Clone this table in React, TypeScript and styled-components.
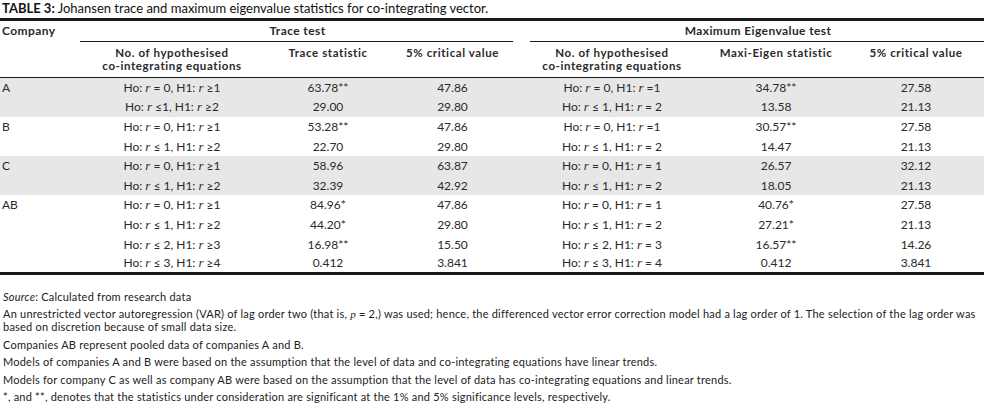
import React from 'react';
import styled, {createGlobalStyle} from 'styled-components';

const GlobalStyle = createGlobalStyle`
  html, body {
    margin: 0;
    padding: 0;
    background: #ffffff;
  }
  body {
    font-family: Lato, "Open Sans", sans-serif;
    color: #222;
  }
`;

type Row = {
  company?: string;
  h1: string;
  trace: string;
  crit1: string;
  h2: string;
  eigen: string;
  crit2: string;
};

const GROUPS: {shade: boolean; rows: Row[]}[] = [
  {
    shade: true,
    rows: [
      {company: 'A', h1: 'Ho: r = 0, H1: r ≥1', trace: '63.78**', crit1: '47.86', h2: 'Ho: r = 0, H1: r =1', eigen: '34.78**', crit2: '27.58'},
      {h1: 'Ho: r ≤1, H1: r ≥2', trace: '29.00', crit1: '29.80', h2: 'Ho: r ≤ 1, H1: r = 2', eigen: '13.58', crit2: '21.13'},
    ],
  },
  {
    shade: false,
    rows: [
      {company: 'B', h1: 'Ho: r = 0, H1: r ≥1', trace: '53.28**', crit1: '47.86', h2: 'Ho: r = 0, H1: r =1', eigen: '30.57**', crit2: '27.58'},
      {h1: 'Ho: r ≤ 1, H1: r ≥2', trace: '22.70', crit1: '29.80', h2: 'Ho: r ≤ 1, H1: r = 2', eigen: '14.47', crit2: '21.13'},
    ],
  },
  {
    shade: true,
    rows: [
      {company: 'C', h1: 'Ho: r = 0, H1: r ≥1', trace: '58.96', crit1: '63.87', h2: 'Ho: r = 0, H1: r = 1', eigen: '26.57', crit2: '32.12'},
      {h1: 'Ho: r ≤ 1, H1: r ≥2', trace: '32.39', crit1: '42.92', h2: 'Ho: r ≤ 1, H1: r = 2', eigen: '18.05', crit2: '21.13'},
    ],
  },
  {
    shade: false,
    rows: [
      {company: 'AB', h1: 'Ho: r = 0, H1: r ≥1', trace: '84.96*', crit1: '47.86', h2: 'Ho: r = 0, H1: r = 1', eigen: '40.76*', crit2: '27.58'},
      {h1: 'Ho: r ≤ 1, H1: r ≥2', trace: '44.20*', crit1: '29.80', h2: 'Ho: r ≤ 1, H1: r = 2', eigen: '27.21*', crit2: '21.13'},
      {h1: 'Ho: r ≤ 2, H1: r ≥3', trace: '16.98**', crit1: '15.50', h2: 'Ho: r ≤ 2, H1: r = 3', eigen: '16.57**', crit2: '14.26'},
      {h1: 'Ho: r ≤ 3, H1: r ≥4', trace: '0.412', crit1: '3.841', h2: 'Ho: r ≤ 3, H1: r = 4', eigen: '0.412', crit2: '3.841'},
    ],
  },
];

// the only "r" in these strings is the rank variable, set in italic
function Hypothesis({text}: {text: string}) {
  const parts = text.split('r');
  return (
      <>
        {parts.map((p, i) => (
            <React.Fragment key={i}>
              {p}
              {i < parts.length - 1 && <Var>r</Var>}
            </React.Fragment>
        ))}
      </>
  );
}

export default function App() {
  return (
      <Page>
        <GlobalStyle/>
        <Caption><b>TABLE 3:</b> Johansen trace and maximum eigenvalue statistics for co-integrating vector.</Caption>
        <Table>
          <colgroup>
            <col style={{width: 80}}/>
            <col style={{width: 184}}/>
            <col style={{width: 128}}/>
            <col style={{width: 121}}/>
            <col style={{width: 17}}/>
            <col style={{width: 164}}/>
            <col style={{width: 164}}/>
            <col/>
          </colgroup>
          <thead>
            <tr>
              <TopCell $align="left">Company</TopCell>
              <TopCell colSpan={3} $rule>Trace test</TopCell>
              <TopCell/>
              <TopCell colSpan={3} $rule>Maximum Eigenvalue test</TopCell>
            </tr>
            <SubRow>
              <SubCell/>
              <SubCell>No. of hypothesised<br/>co-integrating equations</SubCell>
              <SubCell>Trace statistic</SubCell>
              <SubCell>5% critical value</SubCell>
              <SubCell/>
              <SubCell>No. of hypothesised<br/>co-integrating equations</SubCell>
              <SubCell>Maxi-Eigen statistic</SubCell>
              <SubCell $last>5% critical value</SubCell>
            </SubRow>
          </thead>
          {GROUPS.map((g, gi) => (
              <Group key={gi} $shade={g.shade}>
                {g.rows.map((r, ri) => (
                    <tr key={ri}>
                      <Cell $align="left">{r.company}</Cell>
                      <Cell><Hypothesis text={r.h1}/></Cell>
                      <Cell>{r.trace}</Cell>
                      <Cell>{r.crit1}</Cell>
                      <Cell/>
                      <Cell><Hypothesis text={r.h2}/></Cell>
                      <Cell>{r.eigen}</Cell>
                      <Cell $last>{r.crit2}</Cell>
                    </tr>
                ))}
              </Group>
          ))}
        </Table>
        <Notes>
          <Note><i>Source</i>: Calculated from research data</Note>
          <Note>An unrestricted vector autoregression (VAR) of lag order two (that is, <NoteVar>p</NoteVar> = 2,) was used; hence, the differenced vector error correction model had a lag order of 1. The selection of the lag order was based on discretion because of small data size.</Note>
          <Note>Companies AB represent pooled data of companies A and B.</Note>
          <Note>Models of companies A and B were based on the assumption that the level of data and co-integrating equations have linear trends.</Note>
          <Note>Models for company C as well as company AB were based on the assumption that the level of data has co-integrating equations and linear trends.</Note>
          <Note>*, and **, denotes that the statistics under consideration are significant at the 1% and 5% significance levels, respectively.</Note>
        </Notes>
      </Page>
  );
}

const Page = styled.div`
  width: 984px;
`;

const Caption = styled.div`
  font-size: 13px;
  line-height: 17px;
  color: #111;
  padding-left: 2px;
  height: 18px;
  white-space: nowrap;
  
  b {
    font-weight: 700;
  }
`;

const Table = styled.table`
  width: 984px;
  table-layout: fixed;
  border-collapse: collapse;
  border-top: 3px solid #1a1a1a;
  border-bottom: 3px solid #1a1a1a;
  font-size: 12px;
  color: #2a2a2a;
`;

const TopCell = styled.th<{$align?: string; $rule?: boolean}>`
  box-sizing: border-box;
  height: 22px;
  padding: 0 0 2px 2px;
  text-align: ${p => p.$align || 'center'};
  font-weight: 700;
  letter-spacing: 0.4px;
  vertical-align: middle;
  border-bottom: ${p => (p.$rule ? '1px solid #1a1a1a' : 'none')};
`;

const SubRow = styled.tr`
  border-bottom: 1px solid #1a1a1a;
`;

const SubCell = styled.th<{$last?: boolean}>`
  box-sizing: border-box;
  height: 36px;
  padding: 5px ${p => (p.$last ? '10px' : '0')} 0 0;
  text-align: center;
  vertical-align: top;
  font-size: 11.5px;
  font-weight: 700;
  letter-spacing: 0.6px;
  line-height: 12.5px;
`;

const Group = styled.tbody<{$shade: boolean}>`
  background: ${p => (p.$shade ? '#e7e7e7' : '#ffffff')};
`;

const Cell = styled.td<{$align?: string; $last?: boolean}>`
  box-sizing: border-box;
  height: 19.6px;
  padding: 0 ${p => (p.$last ? '10px' : '0')} 0 ${p => (p.$align === 'left' ? '2px' : '0')};
  text-align: ${p => p.$align || 'center'};
  vertical-align: middle;
  white-space: nowrap;
`;

const Var = styled.i`
  font-family: "Liberation Serif", serif;
  font-size: 1.08em;
  line-height: 1;
`;

const NoteVar = styled(Var)`
  font-size: 1em;
`;

const Notes = styled.div`
  padding: 15px 0 0 3px;
  font-size: 11px;
  line-height: 13px;
  letter-spacing: 0.22px;
  color: #222;
`;

const Note = styled.p`
  margin: 0 0 4.5px;
`;
